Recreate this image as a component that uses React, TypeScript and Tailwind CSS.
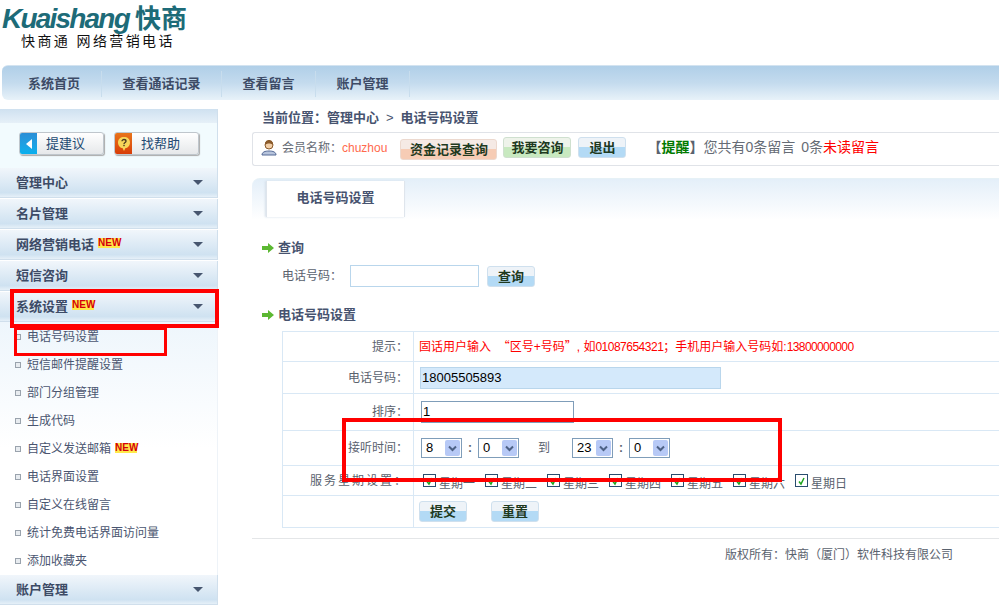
import React from 'react';

const FONT = { fontFamily: '"Liberation Sans", "Noto Sans CJK SC", sans-serif' };

function NewBadge({ className }: { className: string }) {
  return (
    <span className={`ml-[4px] inline-block h-[10px] w-[22px] bg-[#ffe94a] text-center text-[10px] leading-[10px] font-bold text-[#d4000c] ${className}`}>
      NEW
    </span>
  );
}

function MenuHeader({ title, isNew }: { title: string; isNew?: boolean }) {
  return (
    <div className="flex h-[30px] items-center justify-between border-r border-b border-[#d0dfec] bg-gradient-to-b from-[#f1f6fb] via-[#cfe2f1] via-85% to-[#e6f0f8] pr-[14px] pl-[16px]">
      <div className="flex items-center text-[13px] font-bold text-[#3d4b66]">
        {title}
        {isNew && <NewBadge className="mb-[3px]" />}
      </div>
      <div className="h-0 w-0 border-x-[5px] border-t-[5px] border-x-transparent border-t-[#47566f]" />
    </div>
  );
}

function SubItem({ title, isNew }: { title: string; isNew?: boolean }) {
  return (
    <div className="flex h-[28px] items-center pl-[15px] text-[12px] text-[#4a5570]">
      <span className="mr-[6px] h-[6px] w-[6px] border border-[#9aa3ad] bg-[#e8ecf0]" />
      {title}
      {isNew && <NewBadge className="mb-[2px]" />}
    </div>
  );
}

function HalfButton({ label, className }: { label: string; className: string }) {
  return (
    <button className={`h-[21px] rounded-[3px] border text-[13px] leading-[20px] font-bold text-[#1f3a1f] ${className}`}>
      {label}
    </button>
  );
}

const blueBtn = 'border-[#cfe0ee] bg-gradient-to-b from-[#eef3f8] from-50% to-[#b3daf5] to-50%';

function SectionTitle({ label }: { label: string }) {
  return (
    <div className="flex h-[16px] items-center text-[13px] font-bold text-[#47536f]">
      <svg width="12" height="10" viewBox="0 0 12 10" className="mr-[4px] ml-[10px]">
        <path d="M0 3h6V0l6 5-6 5V7H0z" fill="#5cb832" />
      </svg>
      {label}
    </div>
  );
}

function Row({ label, h, labelClass, children }: { label: string; h: string; labelClass?: string; children: React.ReactNode }) {
  return (
    <div className={`flex border-b border-[#d9e8f5] ${h}`}>
      <div className={`flex w-[131px] shrink-0 items-center justify-end border-r border-[#d9e8f5] pr-[5px] text-[12px] text-[#5a626e] ${labelClass ?? ''}`}>
        {label}
      </div>
      <div className="flex flex-1 items-center pl-[5px] text-[12px]">{children}</div>
    </div>
  );
}

function FakeSelect({ value }: { value: string }) {
  return (
    <div className="flex h-[20px] w-[41px] items-center justify-between border border-[#7f9db9] bg-white pr-[1px] pl-[4px] text-[13px] text-black">
      {value}
      <span className="flex h-[16px] w-[15px] items-center justify-center rounded-[2px] bg-[#b7c9f6]">
        <svg width="9" height="7" viewBox="0 0 9 7">
          <path d="M1 1.5l3.5 3.5L8 1.5" fill="none" stroke="#4d6185" strokeWidth="2" />
        </svg>
      </span>
    </div>
  );
}

function Day({ label }: { label: string }) {
  return (
    <label className="mr-[10px] flex items-center text-[12px] text-[#5a626e]">
      <span className="mr-[3px] flex h-[13px] w-[13px] items-end justify-center border border-[#2a4d6e] bg-white">
        <svg width="9" height="9" viewBox="0 0 9 9">
          <path d="M2 4.5l2 2.5 3-6" fill="none" stroke="#1fa51f" strokeWidth="1.5" />
        </svg>
      </span>
      <span className="mt-[7px]">{label}</span>
    </label>
  );
}

const menusTop = [{ t: '管理中心' }, { t: '名片管理' }, { t: '网络营销电话', n: true }, { t: '短信咨询' }, { t: '系统设置', n: true }];
const subs = [
  { t: '电话号码设置' },
  { t: '短信邮件提醒设置' },
  { t: '部门分组管理' },
  { t: '生成代码' },
  { t: '自定义发送邮箱', n: true },
  { t: '电话界面设置' },
  { t: '自定义在线留言' },
  { t: '统计免费电话界面访问量' },
  { t: '添加收藏夹' },
];
const navItems = [
  { t: '系统首页', w: 'w-[100px] pl-[5px]' },
  { t: '查看通话记录', w: 'w-[120px]' },
  { t: '查看留言', w: 'w-[94px]' },
  { t: '账户管理', w: 'w-[94px]' },
];
const days = ['星期一', '星期二', '星期三', '星期四', '星期五', '星期六', '星期日'];

const sideBtn = 'flex h-[23px] w-[85px] items-center overflow-hidden rounded-[3px] border border-[#bfc6cc] bg-gradient-to-b from-white to-[#e6e8ea] text-[13px] text-[#234a73] shadow-[1px_1px_1px_#aaa]';

export default function App() {
  return (
    <div className="relative h-[608px] w-[999px] overflow-hidden bg-white" style={FONT}>
      {/* logo */}
      <div className="h-[65px] pl-[2px]">
        <div className="flex h-[33px] items-center pt-[5px] text-[#1d6b78]">
          <span className="text-[28px] leading-none font-bold tracking-[-1.8px] italic">Kuaishang</span>
          <span className="ml-[6px] text-[26px] leading-none font-bold">快商</span>
        </div>
        <div className="pl-[19px] text-[14px] leading-[16px] tracking-[2.4px] text-[#111]">快商通 网络营销电话</div>
      </div>

      {/* nav */}
      <div className="ml-[2px] flex h-[35px] items-center rounded-l-[6px] border-t border-[#d3e3f0] bg-gradient-to-b from-[#b0cfe8] via-[#c4dbee] to-[#e8f2f9] pt-[1px]">
        {navItems.map((n) => (
          <div key={n.t} className={`flex h-[26px] items-center justify-center border-r border-[#c8dded] text-[13px] font-bold text-[#3d4b66] ${n.w}`}>
            {n.t}
          </div>
        ))}
      </div>

      <div className="mt-[9px] flex">
        {/* sidebar */}
        <div className="w-[218px] shrink-0">
          <div className="h-[14px] border-r border-[#d0dfec] bg-gradient-to-b from-[#cfe1f0] to-[#e6f0f8]" />
          <div className="flex h-[45px] items-center gap-[10px] border-r border-[#d0dfec] bg-[#f2fbfe] pb-[4px] pl-[19px]">
            <button className={sideBtn}>
              <span className="flex h-full w-[17px] items-center justify-center bg-gradient-to-b from-[#2a8ed6] to-[#04b0ee]">
                <span className="h-0 w-0 border-y-[5px] border-r-[6px] border-y-transparent border-r-white" />
              </span>
              <span className="pl-[9px]">提建议</span>
            </button>
            <button className={sideBtn}>
              <span className="flex h-full w-[17px] items-center justify-center bg-gradient-to-b from-[#e8741a] to-[#d83c08]">
                <svg width="14" height="16" viewBox="0 0 14 16">
                  <path d="M7 1c3.5 0 6 2 6 5.5S10.500 12 8.500 12L7 15l-1.500-3C3.500 12 1 10 1 6.500S3.500 1 7 1z" fill="#f7d65a" />
                  <path d="M5 5.200C5 4 6 3.500 7 3.500s2 .6 2 1.700C9 6.500 7 6.500 7 8" fill="none" stroke="#4a3a20" strokeWidth="1.300" />
                  <rect x="6.300" y="8.800" width="1.400" height="1.400" fill="#4a3a20" />
                </svg>
              </span>
              <span className="pl-[9px]">找帮助</span>
            </button>
          </div>
          <div className="flex flex-col gap-[1px]">
            {menusTop.map((m) => (
              <MenuHeader key={m.t} title={m.t} isNew={m.n} />
            ))}
          </div>
          <div className="border-r border-[#eef3f8] bg-gradient-to-b from-[#eef6fc] via-white to-white pt-[1px]">
            {subs.map((s) => (
              <SubItem key={s.t} title={s.t} isNew={s.n} />
            ))}
          </div>
          <MenuHeader title="账户管理" />
        </div>

        {/* main */}
        <div className="ml-[34px] flex-1">
          <div className="flex h-[18px] items-center pl-[10px] text-[13px] font-bold text-[#47536f]">
            当前位置：管理中心
            <span className="mx-[7px] font-normal">&gt;</span>
            电话号码设置
          </div>
          <div className="mt-[5px] flex h-[34px] items-center rounded-l-[3px] border-y border-l border-[#e0e3e8] pb-[3px] pl-[8px] text-[12px] text-[#666c75]">
            <svg width="16" height="17" viewBox="0 0 16 17" className="mr-[5px]">
              <path d="M1 16c0-3 3-4 7-4s7 1 7 4z" fill="#b7c4dc" stroke="#556a96" />
              <circle cx="8" cy="6" r="4" fill="#f2cfa8" stroke="#8a5a2a" />
              <path d="M4 6c0-4 2-5 4-5s4 1 4 5c-2-2-6-2-8 0z" fill="#8a5a2a" />
            </svg>
            <span>会员名称：</span>
            <span className="text-[#ff6a4d]">chuzhou</span>
            <HalfButton label="资金记录查询" className="mt-[3px] ml-[13px] w-[97px] border-[#ecd9cf] bg-gradient-to-b from-[#f5eae5] from-50% to-[#f6ccb5] to-50%" />
            <HalfButton label="我要咨询" className="ml-[6px] w-[68px] border-[#cfe0cf] bg-gradient-to-b from-[#eef3ea] from-50% to-[#c8e9c0] to-50%" />
            <HalfButton label="退出" className={`ml-[7px] w-[48px] ${blueBtn}`} />
            <span className="ml-[21px] text-[14px] font-bold text-[#5a626e]">
              【<span className="text-[#007a00]">提醒</span>】
            </span>
            <span className="text-[14px]">您共有0条留言<span className="ml-[6px]">0条</span><span className="text-[#ff0000]">未读留言</span></span>
          </div>

          {/* tab bar */}
          <div className="mt-[12px] h-[42px] rounded-tl-[8px] border-t border-[#e6f1f6] bg-gradient-to-b from-[#e4eff9] to-white pl-[14px]">
            <div className="mt-[2px] flex h-[36px] w-[139px] items-center justify-center border-x border-[#dfe5ec] bg-white pb-[3px] text-[13px] font-bold text-[#47536f] shadow-[-1px_0_2px_#d5dfe9]">
              电话号码设置
            </div>
          </div>

          <div className="mt-[20px]">
            <SectionTitle label="查询" />
            <div className="mt-[9px] flex items-center pl-[30px] text-[12px] text-[#5a626e]">
              电话号码：
              <input className="ml-[8px] h-[22px] w-[129px] border border-[#b9d6ec] bg-white" />
              <HalfButton label="查询" className={`ml-[8px] w-[48px] ${blueBtn}`} />
            </div>
          </div>

          <div className="mt-[20px]">
            <SectionTitle label="电话号码设置" />
            <div className="mt-[8px] ml-[30px] border-t border-l border-[#d9e8f5]">
              <Row label="提示：" h="h-[30px]">
                <span className="text-[#ff0000]">
                  固话用户输入&nbsp;&nbsp;<span className="font-['Noto_Sans_CJK_SC']">“</span>区号+号码<span className="font-['Noto_Sans_CJK_SC']">”</span>, 如<span className="tracking-[-0.5px]">01087654321</span>；手机用户输入号码如:<span className="tracking-[-0.6px]">13800000000</span>
                </span>
              </Row>
              <Row label="电话号码：" h="h-[32px]">
                <div className="ml-[1px] flex h-[22px] w-[301px] items-center border border-[#b9d6ec] bg-[#d4e9fb] pl-[1px] text-[13px] text-black">18005505893</div>
              </Row>
              <Row label="排序：" h="h-[37px]">
                <div className="ml-[2px] flex h-[22px] w-[153px] items-center border border-[#7f9db9] bg-white pl-[1px] text-[13px] text-black">1</div>
              </Row>
              <Row label="接听时间：" h="h-[35px]">
                <div className="ml-[2px] flex items-center text-[#5a626e]">
                  <FakeSelect value="8" />
                  <span className="w-[16px] text-center font-bold">:</span>
                  <FakeSelect value="0" />
                  <span className="ml-[19px] w-[34px]">到</span>
                  <FakeSelect value="23" />
                  <span className="w-[16px] text-center font-bold">:</span>
                  <FakeSelect value="0" />
                </div>
              </Row>
              <Row label="服务星期设置：" h="h-[30px]" labelClass="tracking-[2px]">
                <div className="ml-[4px] flex items-center">
                  {days.map((d) => (
                    <Day key={d} label={d} />
                  ))}
                </div>
              </Row>
              <Row label="" h="h-[32px]">
                <HalfButton label="提交" className={`w-[48px] ${blueBtn}`} />
                <HalfButton label="重置" className={`ml-[24px] w-[48px] ${blueBtn}`} />
              </Row>
            </div>
            <div className="mt-[10px] flex justify-end border-t border-[#e4e6e8] pt-[7px] pr-[46px] text-[12px] text-[#5a626e]">
              版权所有：快商（厦门）软件科技有限公司
            </div>
          </div>
        </div>
      </div>

      {/* red annotation boxes */}
      <div className="absolute top-[289px] left-[10px] h-[39px] w-[209px] border-[4px] border-[#ff0000]" />
      <div className="absolute top-[327px] left-[14px] h-[29px] w-[153px] border-[3px] border-[#ff0000]" />
      <div className="absolute top-[418px] left-[342px] h-[64px] w-[440px] border-[4px] border-[#ff0000]" />
    </div>
  );
}
